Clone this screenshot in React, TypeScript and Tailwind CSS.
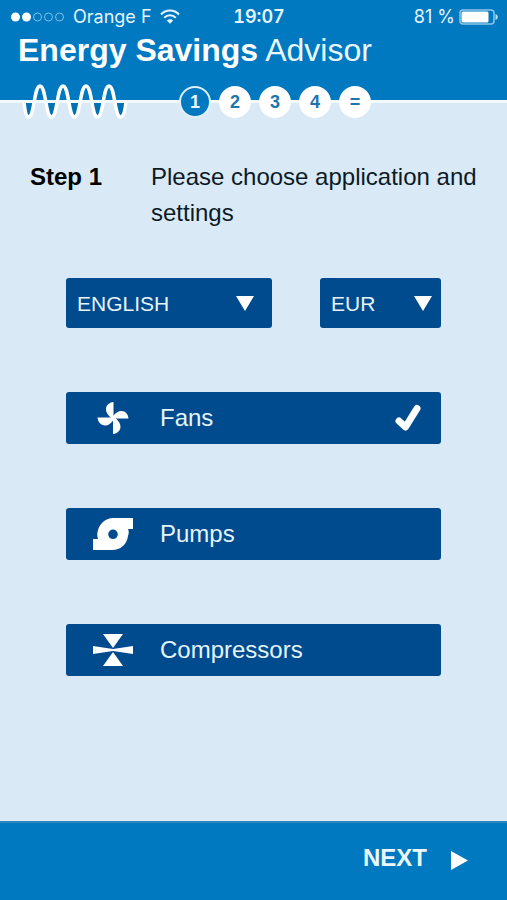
import React, { useState } from 'react';

type AppKey = 'fans' | 'pumps' | 'compressors';

const steps = ['1', '2', '3', '4', '='];

const FanIcon = () => (
  <svg width="40" height="32" viewBox="0 0 40 32" fill="#fff" aria-hidden="true">
    <path d="M20.500 0V16H18C15 13 12.800 10.500 13 7C13.300 3 16 .500 20.500 0Z" />
    <path d="M35.500 16.500H20V14C22.500 11 25 9 28.500 9C32.500 9.200 35 12 35.500 16.500Z" />
    <path d="M20 32V16H22.500C25.500 19 27.500 21.500 27.500 25C27 29 24.500 31.500 20 32Z" />
    <path d="M4.500 15.500H20.500V18C18 21.500 15.500 23.500 12 23.500C8 23.300 5 20.500 4.500 15.500Z" />
  </svg>
);

const PumpIcon = () => (
  <svg width="40" height="32" viewBox="0 0 40 32" fill="#fff" fillRule="evenodd" aria-hidden="true">
    <path d="M20 0H40V11H35C36 13 36 15 35 18C34 26 28 32 19 32H0V21H5C4 18 4 15 5 12C7 5 13 0 20 0ZM20 11.500A4.800 4.800 0 1 0 20 21.100A4.800 4.800 0 1 0 20 11.500Z" />
  </svg>
);

const CompressorIcon = () => (
  <svg width="40" height="32" viewBox="0 0 40 32" fill="#fff" aria-hidden="true">
    <path d="M10 0H30L20 14Z" />
    <path d="M10 32H30L20 18Z" />
    <path d="M0 12L20 15L40 12V20L20 17L0 20Z" />
  </svg>
);

const CheckIcon = () => (
  <svg width="28" height="28" viewBox="0 0 28 28" fill="none" stroke="#fff" strokeWidth="7" strokeLinecap="round" strokeLinejoin="round" aria-hidden="true">
    <path d="M5 17L11.500 23L23 4.500" />
  </svg>
);

const WifiIcon = () => (
  <svg className="shrink-0" width="20" height="16" viewBox="0 0 20 16" fill="none" stroke="#e6f4fc" strokeWidth="2" aria-hidden="true">
    <path d="M1 5.500C6 .3 14 .3 19 5.500" />
    <path d="M4.200 8.800C7.500 5.500 12.500 5.500 15.800 8.800" />
    <path d="M6.800 11.500C8.700 9.700 11.300 9.700 13.200 11.500L10 14.800Z" fill="#e6f4fc" stroke="none" />
  </svg>
);

const BatteryIcon = () => (
  <svg width="40" height="16" viewBox="0 0 40 16" aria-hidden="true">
    <rect x="1" y="1" width="34" height="14" rx="3" fill="none" stroke="#8cc6ea" strokeWidth="1.500" />
    <rect x="2.500" y="2.500" width="27" height="11" rx="1.500" fill="#fff" />
    <path d="M36.500 5C39.500 6 39.500 10 36.500 11Z" fill="#b9def3" />
  </svg>
);

// Sine wave riding on the header's bottom line
const WaveLogo = () => (
  <svg width="106" height="38" viewBox="0 0 106 38" aria-hidden="true">
    <path
      d="M3 19H12C10 28 9 34 7 34S4 28 3 19ZM24 19H35C33 28 32 34 29.500 34S26 28 24 19ZM47 19H58C56 28 55 34 52.500 34S49 28 47 19ZM70 19H81C79 28 78 34 75.500 34S72 28 70 19ZM93 19H103C102 28 101 34 98.500 34S95 28 93 19Z"
      fill="#0071b3"
    />
    <path
      d="M2 19C3 28 4 34 6.500 34C12.500 34 12 3 18 3S23.500 34 29.500 34S35 3 41 3S46.500 34 52.500 34S58 3 64 3S69.500 34 75.500 34S81 3 87 3S92.500 34 98.500 34C101.500 34 103 28 104 19"
      fill="none"
      stroke="#fff"
      strokeWidth="3.500"
    />
    <path d="M0 18.500H106" stroke="#f2fafe" strokeWidth="3" />
  </svg>
);

const applications: { key: AppKey; label: string; icon: React.ReactNode }[] = [
  { key: 'fans', label: 'Fans', icon: <FanIcon /> },
  { key: 'pumps', label: 'Pumps', icon: <PumpIcon /> },
  { key: 'compressors', label: 'Compressors', icon: <CompressorIcon /> },
];

interface PickerProps {
  label: string;
  options: string[];
  className: string;
  arrowClass: string;
}

const Picker = ({ label, options, className, arrowClass }: PickerProps) => (
  <div className={`relative ${className}`}>
    <select
      aria-label={label}
      className="h-[50px] w-full appearance-none rounded-[3px] bg-[#004b8d] pt-px pl-[11px] pr-10 text-[21px] text-[#e6f4fc]"
    >
      {options.map(o => <option key={o}>{o}</option>)}
    </select>
    <svg className={`pointer-events-none absolute top-[18px] ${arrowClass}`} width="18" height="15" viewBox="0 0 18 15" fill="#fff" aria-hidden="true">
      <path d="M0 0H18L9 15Z" />
    </svg>
  </div>
);

const StatusBar = () => (
  <div className="grid h-[34px] grid-cols-3 items-center pl-[11px] pr-2 font-['Inter',sans-serif] text-lg text-[#e6f4fc]">
    <div className="flex items-center gap-2 whitespace-nowrap">
      <svg className="shrink-0" width="54" height="10" viewBox="0 0 54 10" aria-hidden="true">
        <circle cx="4.500" cy="5" r="4.500" fill="#fff" />
        <circle cx="15.500" cy="5" r="4.500" fill="#fff" />
        <g fill="none" stroke="#7fc0e8">
          <circle cx="26.500" cy="5" r="4" />
          <circle cx="37.500" cy="5" r="4" />
          <circle cx="48.500" cy="5" r="4" />
        </g>
      </svg>
      <span>Orange F</span>
      <WifiIcon />
    </div>
    <div className="pl-2 text-center font-semibold tabular-nums">19:07</div>
    <div className="flex items-center justify-end gap-1 whitespace-nowrap">
      <span>81 %</span>
      <BatteryIcon />
    </div>
  </div>
);

const App = () => {
  const [selected, setSelected] = useState<AppKey>('fans');

  return (
    <div className="flex min-h-screen flex-col bg-[#d9eaf6] font-['Liberation_Sans',Arial,sans-serif]">
      <header className="h-[103px] border-b-[3px] border-[#f2fafe] bg-[#0079c1]">
        <StatusBar />
        <h1 className="pl-[18px] text-[32px] leading-8 text-[#eaf7fd]">
          <strong className="font-bold text-white">Energy Savings</strong> Advisor
        </h1>
      </header>

      {/* Logo and stepper straddle the header's edge */}
      <div className="relative -mt-5 flex h-[38px] items-center gap-[51px] pl-[22px]">
        <WaveLogo />
        <ol className="flex gap-2">
          {steps.map((s, i) => (
            <li key={s}>
              <button
                aria-current={i === 0 ? 'step' : undefined}
                className={`flex size-8 items-center justify-center rounded-full border-2 text-lg font-bold ${
                  i === 0 ? 'border-[#dff2fc] bg-[#0079c1] text-[#eaf7fd]' : 'border-white bg-white text-[#1c75ae]'
                }`}
              >
                {s}
              </button>
            </li>
          ))}
        </ol>
      </div>

      <main className="flex-1 pt-[38px]">
        <div className="flex px-[30px] text-2xl leading-9 text-[#0d1a26]">
          <h2 className="w-[121px] shrink-0 font-bold text-black">Step 1</h2>
          <p>Please choose application and settings</p>
        </div>

        <div className="flex flex-col gap-16 px-[66px] pt-[47px] pb-16">
          <div className="flex gap-12">
            <Picker label="Language" options={['ENGLISH', 'DEUTSCH', 'SUOMI']} className="flex-1" arrowClass="right-[18px]" />
            <Picker label="Currency" options={['EUR', 'USD', 'GBP']} className="w-[121px]" arrowClass="right-[9px]" />
          </div>
          {applications.map(a => (
            <button
              key={a.key}
              onClick={() => setSelected(a.key)}
              aria-pressed={selected === a.key}
              className="flex h-[52px] items-center rounded-[3px] bg-[#004b8d] pl-[27px] pr-[19px] text-2xl text-[#e6f4fc]"
            >
              {a.icon}
              <span className="ml-[27px] flex-1 text-left">{a.label}</span>
              {selected === a.key && <CheckIcon />}
            </button>
          ))}
        </div>
      </main>

      <footer className="flex h-[79px] justify-end border-t-2 border-[#2f86bd] bg-[#0079c1] pr-[39px] pb-1">
        <button className="flex items-center gap-6 text-2xl font-bold text-[#eaf7fd]">
          <span className="pb-1">NEXT</span>
          <svg width="17" height="20" viewBox="0 0 17 20" fill="#fff" aria-hidden="true">
            <path d="M0 1L17 10.500L0 20Z" />
          </svg>
        </button>
      </footer>
    </div>
  );
};

export default App;
